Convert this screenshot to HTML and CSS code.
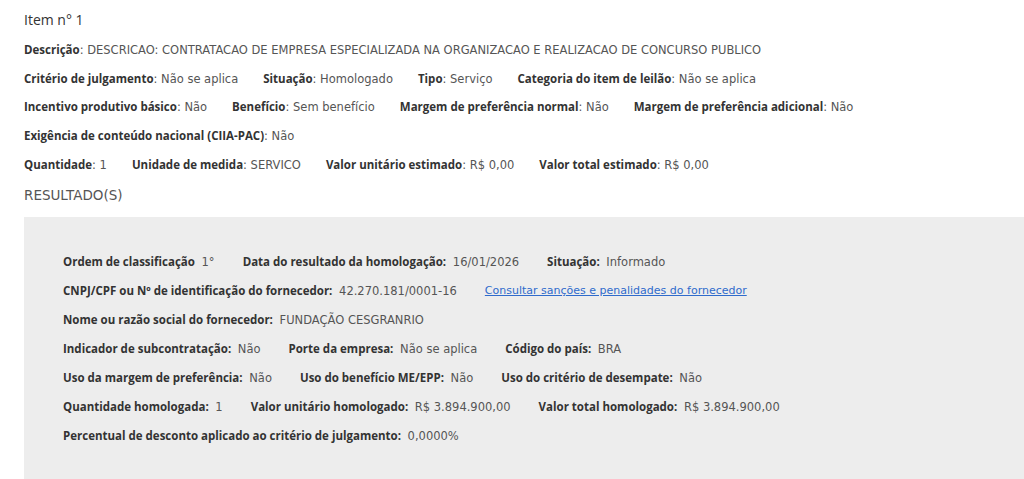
FILE: index.html
```html
<!DOCTYPE html>
<html lang="pt-BR">
<head>
<meta charset="utf-8">
<title>Item n° 1</title>
<link rel="stylesheet" href="styles.css">
</head>
<body>
<div class="page">
  <h2 class="title">Item n° 1</h2>
  <div class="row"><span class="f"><b>Descrição</b>: DESCRICAO: CONTRATACAO DE EMPRESA ESPECIALIZADA NA ORGANIZACAO E REALIZACAO DE CONCURSO PUBLICO</span></div>
  <div class="row">
    <span class="f"><b>Critério de julgamento</b>: Não se aplica</span>
    <span class="f"><b>Situação</b>: Homologado</span>
    <span class="f"><b>Tipo</b>: Serviço</span>
    <span class="f"><b>Categoria do item de leilão</b>: Não se aplica</span>
  </div>
  <div class="row">
    <span class="f"><b>Incentivo produtivo básico</b>: Não</span>
    <span class="f"><b>Benefício</b>: Sem benefício</span>
    <span class="f"><b>Margem de preferência normal</b>: Não</span>
    <span class="f"><b>Margem de preferência adicional</b>: Não</span>
  </div>
  <div class="row"><span class="f"><b>Exigência de conteúdo nacional (CIIA-PAC)</b>: Não</span></div>
  <div class="row">
    <span class="f"><b>Quantidade</b>: 1</span>
    <span class="f"><b>Unidade de medida</b>: SERVICO</span>
    <span class="f"><b>Valor unitário estimado</b>: R$ 0,00</span>
    <span class="f"><b>Valor total estimado</b>: R$ 0,00</span>
  </div>
  <div class="section">RESULTADO(S)</div>
  <div class="box">
    <div class="brow">
      <span class="g"><b>Ordem de classificação</b> 1°</span>
      <span class="g"><b>Data do resultado da homologação:</b> 16/01/2026</span>
      <span class="g"><b>Situação:</b> Informado</span>
    </div>
    <div class="brow">
      <span class="g"><b>CNPJ/CPF ou Nº de identificação do fornecedor:</b> 42.270.181/0001-16</span>
      <a class="link" href="#">Consultar sanções e penalidades do fornecedor</a>
    </div>
    <div class="brow">
      <span class="g"><b>Nome ou razão social do fornecedor:</b> FUNDAÇÃO CESGRANRIO</span>
    </div>
    <div class="brow">
      <span class="g"><b>Indicador de subcontratação:</b> Não</span>
      <span class="g"><b>Porte da empresa:</b> Não se aplica</span>
      <span class="g"><b>Código do país:</b> BRA</span>
    </div>
    <div class="brow">
      <span class="g"><b>Uso da margem de preferência:</b> Não</span>
      <span class="g"><b>Uso do benefício ME/EPP:</b> Não</span>
      <span class="g"><b>Uso do critério de desempate:</b> Não</span>
    </div>
    <div class="brow">
      <span class="g"><b>Quantidade homologada:</b> 1</span>
      <span class="g"><b>Valor unitário homologado:</b> R$ 3.894.900,00</span>
      <span class="g"><b>Valor total homologado:</b> R$ 3.894.900,00</span>
    </div>
    <div class="brow">
      <span class="g"><b>Percentual de desconto aplicado ao critério de julgamento:</b> 0,0000%</span>
    </div>
  </div>
</div>
</body>
</html>
```
FILE: styles.css
```css
html, body {
  margin: 0;
  padding: 0;
  background: #ffffff;
}
body {
  font-family: "DejaVu Sans", "Open Sans", sans-serif;
  color: #555555;
  font-size: 11.5px;
}
.page {
  padding: 10px 0 0 24px;
}
.title {
  margin: 0;
  font-family: "Open Sans", sans-serif;
  font-size: 14px;
  font-weight: 400;
  color: #333333;
  line-height: 20px;
}
.title + .row { margin-top: 5px; }
.row {
  display: flex;
  gap: 25px;
  height: 28.7px;
  align-items: center;
  white-space: nowrap;
}
b {
  font-family: "Open Sans", sans-serif;
  font-weight: 700;
  color: #333333;
}
.section {
  font-size: 13.5px;
  color: #555555;
  margin-top: 8px;
  line-height: 18px;
}
.box {
  margin-top: 13px;
  background: #ededed;
  padding: 30px 0 40px 39px;
  min-height: 262px;
}
.brow {
  display: flex;
  gap: 28px;
  height: 28.9px;
  align-items: center;
  white-space: nowrap;
}
.g b { margin-right: 3px; }
.link {
  font-size: 11px;
  color: #2f6bcc;
  text-decoration: underline;
}
```
